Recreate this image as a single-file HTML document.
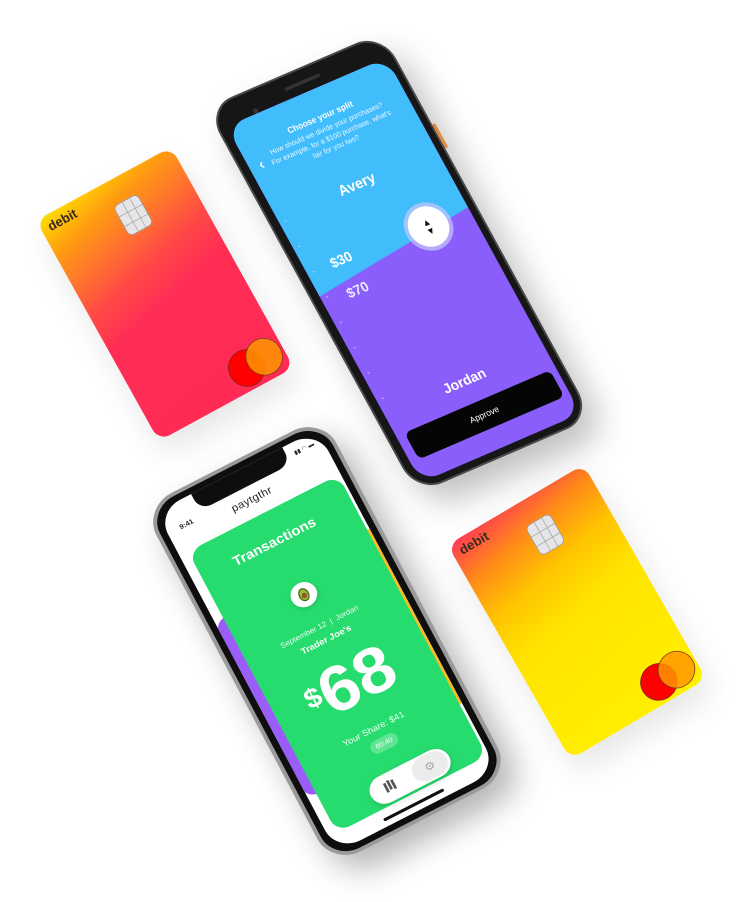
<!DOCTYPE html>
<html><head><meta charset="utf-8"><style>
*{margin:0;padding:0;box-sizing:border-box}
body{width:750px;height:902px;background:#fff;position:relative;overflow:hidden;font-family:"Liberation Sans",sans-serif}
.t{position:absolute;left:0;top:0;transform-origin:0 0}
.abs{position:absolute}
.c{position:absolute;text-align:center;white-space:nowrap}
.chip{position:absolute;left:96px;top:31px;width:36px;height:44px;border-radius:7px;background:#e6e6e8;border:1.5px solid #9a9a9a;overflow:hidden}
.chip i{position:absolute;background:#a8a8a8}
</style></head><body>

<!-- Red card -->
<div class="t" style="width:200px;height:320px;transform:matrix(.675,-.3675,.384,.689,36,220.5);border-radius:16px;overflow:hidden;background:linear-gradient(165deg,#FFE000 0%,#FF9A10 14%,#FF7A2A 24%,#FF4A45 38%,#FF2D55 52%,#FF2A55 100%);box-shadow:0 20px 40px rgba(0,0,0,.1)">
  <div class="abs" style="left:10px;top:6px;font-weight:bold;font-size:17px;color:#3a2a20">debit</div>
  <div class="chip"><i style="left:0;top:14px;width:36px;height:1px"></i><i style="left:0;top:28px;width:36px;height:1px"></i><i style="left:12px;top:0;width:1px;height:44px"></i><i style="left:23px;top:0;width:1px;height:44px"></i></div>
  <div class="abs" style="left:122px;top:268px;width:48px;height:48px;border-radius:50%;background:#f00;border:1.5px solid #7a2a1a"></div>
  <div class="abs" style="left:149px;top:266px;width:48px;height:48px;border-radius:50%;background:rgba(255,150,0,.85);border:1.5px solid #7a3a1a"></div>
</div>

<!-- Yellow card -->
<div class="t" style="width:200px;height:320px;transform:matrix(.68,-.4025,.384,.67,447.5,545);border-radius:16px;overflow:hidden;background:linear-gradient(168deg,#FF3A55 0%,#FF8A18 16%,#FFC400 32%,#FFE400 50%,#FFF000 100%);box-shadow:0 20px 40px rgba(0,0,0,.1)">
  <div class="abs" style="left:10px;top:6px;font-weight:bold;font-size:17px;color:#3a2a20">debit</div>
  <div class="chip"><i style="left:0;top:14px;width:36px;height:1px"></i><i style="left:0;top:28px;width:36px;height:1px"></i><i style="left:12px;top:0;width:1px;height:44px"></i><i style="left:23px;top:0;width:1px;height:44px"></i></div>
  <div class="abs" style="left:122px;top:268px;width:48px;height:48px;border-radius:50%;background:#f00;border:1.5px solid #7a2a1a"></div>
  <div class="abs" style="left:149px;top:266px;width:48px;height:48px;border-radius:50%;background:rgba(255,150,0,.85);border:1.5px solid #7a3a1a"></div>
</div>

<!-- Android phone -->
<div class="t" style="width:300px;height:640px;transform:matrix(.587,-.253,.33,.603,205.5,108);border-radius:44px;background:#161616;border:3px solid #4a4a4a;box-shadow:10px 30px 50px rgba(0,0,0,.25)">
  <div class="abs" style="left:297px;top:150px;width:5px;height:40px;background:#e08a40;border-radius:2px"></div>
  <div class="abs" style="left:120px;top:16px;width:60px;height:5px;background:#333;border-radius:3px"></div>
  <div class="abs" style="left:60px;top:26px;width:8px;height:8px;background:#333;border-radius:50%"></div>
  <div class="abs" style="left:12px;top:34px;width:272px;height:590px;border-radius:30px;overflow:hidden;background:#8A5EFB">
    <div class="abs" style="left:0;top:0;width:272px;height:320px;background:#41BDFC;clip-path:polygon(0 0,100% 0,100% 248px,0 282px)"></div>
    <div class="c" style="left:0;width:272px;top:34px;font-size:13px;font-weight:bold;color:#fff">Choose your split</div>
    <div class="c" style="left:0;width:272px;top:54px;font-size:11px;line-height:15px;color:#e8f7ff">How should we divide your purchases?<br>For example, for a $100 purchase, what's<br>fair for you two?</div>
    <div class="abs" style="left:16px;top:58px;font-size:22px;color:#fff;font-weight:bold">‹</div>
    <div class="c" style="left:0;width:272px;top:140px;font-size:22px;font-weight:bold;color:#fff">Avery</div>
    <div class="abs" style="left:172px;top:220px;width:62px;height:62px;border-radius:50%;background:#fff;box-shadow:0 0 0 6px rgba(200,200,255,.7)">
      <div class="c" style="left:0;width:62px;top:17px;font-size:14px;line-height:14px;color:#111">▲<br>▼</div>
    </div>
    <div class="abs" style="left:40px;top:234px;font-size:21px;font-weight:bold;color:#fff">$30</div>
    <div class="abs" style="left:40px;top:284px;font-size:21px;font-weight:bold;color:#f0e8ff">$70</div>
    <div class="c" style="left:0;width:272px;top:468px;font-size:21px;font-weight:bold;color:#fff">Jordan</div>
    <div class="abs" style="left:14px;top:514px;width:248px;height:44px;border-radius:10px;background:#050505;color:#fff;font-size:13px;text-align:center;line-height:44px">Approve</div>
    <div class="abs" style="left:8px;top:160px;width:4px;height:300px;background:repeating-linear-gradient(180deg,rgba(255,255,255,.35) 0 2px,transparent 2px 42px)"></div>
  </div>
</div>

<!-- iPhone -->
<div class="t" style="width:300px;height:650px;transform:matrix(.6,-.307,.292,.551,142,508);border-radius:50px;background:#0e0e0e;border:6px solid #9a9a9a;box-shadow:10px 30px 50px rgba(0,0,0,.3)">
  <div class="abs" style="left:10px;top:10px;width:268px;height:618px;border-radius:40px;overflow:hidden;background:#fff">
    <div class="abs" style="left:58px;top:-2px;width:152px;height:32px;background:#0e0e0e;border-radius:0 0 20px 20px"></div>
    <div class="abs" style="left:20px;top:34px;font-size:11px;font-weight:bold;color:#222">9:41</div>
    <div class="abs" style="left:222px;top:12px;font-size:9px;color:#222">▮▮ ◠ ▬</div>
    <div class="c" style="left:0;width:268px;top:42px;font-size:17px;color:#222;letter-spacing:.5px">paytgthr</div>
    <div class="abs" style="left:-2px;top:200px;width:120px;height:320px;border-radius:20px;background:#9B5DF9"></div>
    <div class="abs" style="left:180px;top:178px;width:98px;height:320px;border-radius:20px;background:#F8BD22"></div>
    <div class="abs" style="left:14px;top:80px;width:250px;height:510px;border-radius:22px;background:#27DC6E"></div>
    <div class="c" style="left:0;width:268px;top:116px;font-size:22px;font-weight:bold;color:#fff">Transactions</div>
    <div class="abs" style="left:116px;top:206px;width:40px;height:40px;border-radius:50%;background:#fff;box-shadow:0 3px 8px rgba(0,0,0,.15)">
      <div class="abs" style="left:12px;top:9px;width:16px;height:22px;border-radius:50%;background:#9bbf3a;border:2px solid #4a6a1a"></div>
      <div class="abs" style="left:16px;top:17px;width:8px;height:9px;border-radius:50%;background:#8a5a2a"></div>
    </div>
    <div class="c" style="left:0;width:268px;top:276px;font-size:12px;color:#e6ffee">September 12 &nbsp;|&nbsp; Jordan</div>
    <div class="c" style="left:0;width:268px;top:298px;font-size:14px;font-weight:bold;color:#fff">Trader Joe's</div>
    <div class="c" style="left:0;width:268px;top:326px;font-size:104px;font-weight:bold;color:#fff;line-height:110px"><span style="font-size:44px;vertical-align:26px">$</span>68</div>
    <div class="c" style="left:0;width:268px;top:460px;font-size:14px;color:#effff3">Your Share: $41</div>
    <div class="abs" style="left:116px;top:486px;width:44px;height:22px;border-radius:11px;background:rgba(255,255,255,.25);color:#fff;font-size:11px;text-align:center;line-height:22px">60:40</div>
    <div class="abs" style="left:84px;top:540px;width:130px;height:46px;border-radius:23px;background:#fff;box-shadow:0 4px 10px rgba(0,0,0,.15)">
      <div class="abs" style="left:70px;top:3px;width:56px;height:40px;border-radius:20px;background:#ececec;text-align:center;line-height:40px;color:#aaa;font-size:18px">⚙</div>
      <div class="abs" style="left:24px;top:14px;width:4px;height:16px;background:#555;box-shadow:6px -2px 0 #555,12px 0 0 #555"></div>
    </div>
    <div class="abs" style="left:84px;top:604px;width:100px;height:5px;border-radius:3px;background:#111"></div>
  </div>
</div>

</body></html>
